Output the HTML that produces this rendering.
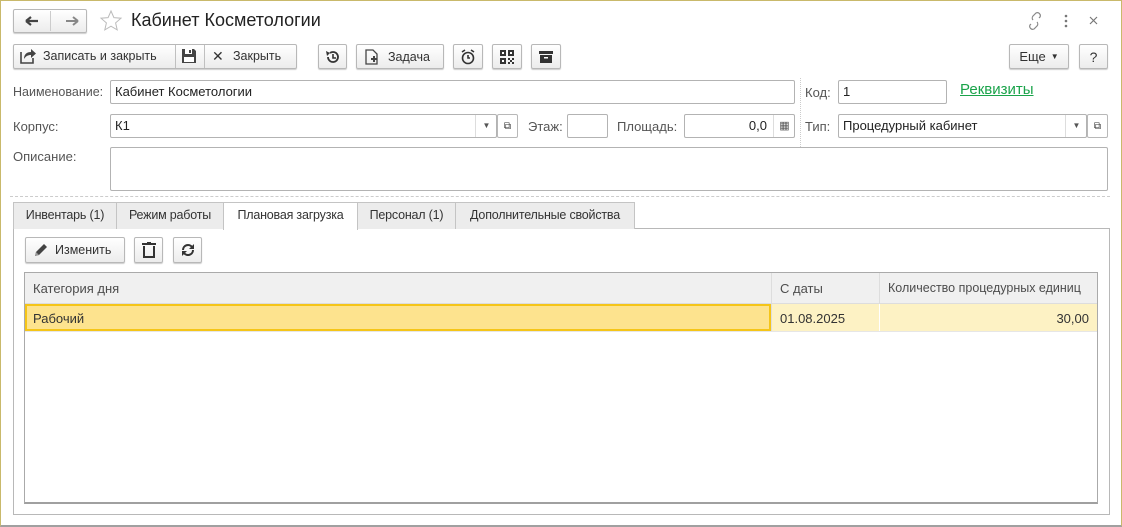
<!DOCTYPE html><html><head><meta charset="utf-8"><style>
*{box-sizing:border-box}
body{margin:0;width:1122px;height:527px;overflow:hidden;background:#fff;font-family:"Liberation Sans",sans-serif;font-size:13px;color:#4d4d4d;position:relative}
.a{position:absolute;white-space:nowrap}
.win{position:absolute;left:0;top:0;width:1122px;height:527px;border:1px solid #c9b96b;border-bottom:2px solid #a0a0a0}
.btn{position:absolute;height:25px;border:1px solid #b8b8b8;border-radius:2px;background:linear-gradient(#fff,#ececec);box-shadow:0 1px 1px rgba(0,0,0,.2);display:flex;align-items:center;justify-content:center;color:#333;font-size:13px;white-space:nowrap}
.inp{position:absolute;height:24px;border:1px solid #b3b3b3;border-radius:2px;background:#fff;color:#222;padding:3px 4px;font-size:13px;line-height:16px;white-space:nowrap}
.lbl{position:absolute;color:#555;font-size:13px;white-space:nowrap}
.tab{position:absolute;top:202px;height:27px;border:1px solid #c4c4c4;background:#ececec;color:#333;padding:5px 0 0 0;text-align:center;font-size:12.5px;border-bottom:none;white-space:nowrap;letter-spacing:-0.2px}
.dd{position:absolute;top:0;height:22px;border-left:1px solid #ddd;width:22px;display:flex;align-items:center;justify-content:center;font-size:8px;color:#555}
</style></head><body>
<div class="win"></div>
<div class="btn" style="left:13px;top:9px;width:74px;height:24px"></div>
<div class="a" style="left:50px;top:11px;width:1px;height:20px;background:#ccc"></div>
<svg class="a" style="left:22px;top:14px" width="60" height="14"><path d="M4 7h12M4 7l5-4M4 7l5 4" stroke="#444" stroke-width="2.2" fill="none"/><path d="M44 7h12M56 7l-5-4M56 7l-5 4" stroke="#888" stroke-width="2" fill="none"/></svg>
<svg class="a" style="left:99px;top:9px" width="24" height="24"><path d="M12 2l2.9 6.6 7.1.6-5.4 4.7 1.6 7-6.2-3.7-6.2 3.7 1.6-7L2 9.2l7.1-.6z" fill="none" stroke="#bbb" stroke-width="1"/></svg>
<div class="a" style="left:131px;top:10px;font-size:18px;color:#222">Кабинет Косметологии</div>
<svg class="a" style="left:1026px;top:12px" width="80" height="18"><path d="M4 12l-1 1a3 3 0 0 0 4 4l3-3a3 3 0 0 0 0-4M12 6l1-1a3 3 0 0 0-4-4l-3 3a3 3 0 0 0 0 4" transform="translate(1,0)" stroke="#888" fill="none" stroke-width="1.2"/><circle cx="40" cy="4" r="1.3" fill="#777"/><circle cx="40" cy="9" r="1.3" fill="#777"/><circle cx="40" cy="14" r="1.3" fill="#777"/><path d="M64 5l7 7M71 5l-7 7" stroke="#777" stroke-width="1.2"/></svg>
<div class="btn" style="left:13px;top:44px;width:284px;justify-content:flex-start"></div>
<div class="a" style="left:175px;top:45px;width:1px;height:23px;background:#c0c0c0"></div>
<div class="a" style="left:204px;top:45px;width:1px;height:23px;background:#c0c0c0"></div>
<svg class="a" style="left:20px;top:48px" width="16" height="16"><path d="M1 4v11h12v-5" fill="none" stroke="#444" stroke-width="1.6"/><path d="M4 11c0-5 3-7 7-7V1l5 4.5L11 10V7c-3 0-5 1-7 4z" fill="#444"/></svg>
<div class="a" style="left:43px;top:49px;color:#333;font-size:12.5px">Записать и закрыть</div>
<svg class="a" style="left:181px;top:48px" width="16" height="16"><path d="M1 1h12l2 2v12H1z" fill="#444"/><rect x="4" y="1" width="7" height="5" fill="#fff"/><rect x="8" y="2" width="2" height="3" fill="#444"/><rect x="3" y="9" width="10" height="5" fill="#fff"/></svg>
<div class="a" style="left:212px;top:48px;color:#333;font-size:14px">✕</div>
<div class="a" style="left:233px;top:49px;color:#333;font-size:12.5px">Закрыть</div>
<div class="btn" style="left:318px;top:44px;width:29px"><svg width="16" height="16"><path d="M3 8a5 5 0 1 0 2-4" fill="none" stroke="#333" stroke-width="1.8"/><path d="M1 2l4 2-3 3z" fill="#333"/><path d="M8 5v4h3" fill="none" stroke="#333" stroke-width="1.6"/></svg></div>
<div class="btn" style="left:356px;top:44px;width:88px;justify-content:flex-start;padding-left:7px"><svg width="16" height="16"><path d="M2 1h7l4 4v10H2z" fill="none" stroke="#444" stroke-width="1.3"/><path d="M7 10h6M10 7v6" stroke="#444" stroke-width="2"/></svg><span style="margin-left:8px;font-size:12.5px">Задача</span></div>
<div class="btn" style="left:453px;top:44px;width:30px"><svg width="16" height="16"><circle cx="8" cy="9" r="5.5" fill="none" stroke="#333" stroke-width="1.6"/><path d="M8 6v3h2M2 3l3-2M14 3l-3-2" stroke="#333" stroke-width="1.6" fill="none"/></svg></div>
<div class="btn" style="left:492px;top:44px;width:30px"><svg width="14" height="14"><path d="M0 0h6v6H0zM8 0h6v6H8zM0 8h6v6H0z" fill="#333"/><path d="M2 2h2v2H2zM10 2h2v2h-2zM2 10h2v2H2z" fill="#fff"/><path d="M8 8h2v2H8zM12 8h2v2h-2zM10 10h2v2h-2zM8 12h2v2H8zM12 12h2v2h-2z" fill="#333"/></svg></div>
<div class="btn" style="left:531px;top:44px;width:30px"><svg width="16" height="14"><rect x="1" y="1" width="14" height="3" fill="#333"/><rect x="2" y="5" width="12" height="8" fill="#333"/><rect x="6" y="7" width="4" height="1.5" fill="#fff"/></svg></div>
<div class="btn" style="left:1009px;top:44px;width:60px">Еще <span style="font-size:8px;margin-left:5px">▼</span></div>
<div class="btn" style="left:1079px;top:44px;width:29px;font-size:14px">?</div>
<div class="lbl" style="left:13px;top:85px;font-size:12.5px">Наименование:</div>
<div class="inp" style="left:110px;top:80px;width:685px">Кабинет Косметологии</div>
<div class="a" style="left:800px;top:78px;height:113px;border-left:1px dotted #ccc"></div>
<div class="lbl" style="left:805px;top:85px">Код:</div>
<div class="inp" style="left:838px;top:80px;width:109px">1</div>
<div class="a" style="left:960px;top:81px;color:#1aa34a;font-size:15px;text-decoration:underline">Реквизиты</div>
<div class="lbl" style="left:13px;top:119px">Корпус:</div>
<div class="inp" style="left:110px;top:114px;width:387px">К1<div class="dd" style="left:364px">▼</div></div>
<div class="btn" style="left:497px;top:114px;width:21px;height:24px;box-shadow:none;background:#fff;font-size:10px">⧉</div>
<div class="lbl" style="left:528px;top:119px">Этаж:</div>
<div class="inp" style="left:567px;top:114px;width:41px"></div>
<div class="lbl" style="left:617px;top:119px">Площадь:</div>
<div class="inp" style="left:684px;top:114px;width:111px;text-align:right;padding-right:27px">0,0<div class="dd" style="left:88px;font-size:11px">▦</div></div>
<div class="lbl" style="left:805px;top:119px">Тип:</div>
<div class="inp" style="left:838px;top:114px;width:249px">Процедурный кабинет<div class="dd" style="left:226px">▼</div></div>
<div class="btn" style="left:1087px;top:114px;width:21px;height:24px;box-shadow:none;background:#fff;font-size:10px">⧉</div>
<div class="lbl" style="left:13px;top:149px">Описание:</div>
<div class="inp" style="left:110px;top:147px;width:998px;height:44px"></div>
<div class="a" style="left:10px;top:196px;width:1100px;border-top:1px dashed #ccc"></div>
<div class="a" style="left:13px;top:228px;width:1097px;height:287px;border:1px solid #b8b8b8"></div>
<div class="tab" style="left:13px;width:104px">Инвентарь (1)</div>
<div class="tab" style="left:116px;width:108px">Режим работы</div>
<div class="tab" style="left:223px;width:135px;background:#fff;height:28px;z-index:2">Плановая загрузка</div>
<div class="tab" style="left:357px;width:99px">Персонал (1)</div>
<div class="tab" style="left:455px;width:180px">Дополнительные свойства</div>
<div class="btn" style="left:25px;top:237px;width:100px;height:26px;justify-content:flex-start;padding-left:7px"><svg width="16" height="16"><path d="M2 14l1-4 8-8 3 3-8 8z" fill="#444"/><path d="M2 14l1-4 3 3z" fill="#999"/></svg><span style="margin-left:6px;font-size:12.5px">Изменить</span></div>
<div class="btn" style="left:134px;top:237px;width:29px;height:26px"><svg width="14" height="16"><path d="M0 2h14" stroke="#333" stroke-width="2"/><path d="M5 1h4" stroke="#333" stroke-width="2"/><path d="M2 4v11h10V4" fill="none" stroke="#333" stroke-width="2"/></svg></div>
<div class="btn" style="left:173px;top:237px;width:29px;height:26px"><svg width="14" height="14"><path d="M2 7a5 5 0 0 1 9-3" fill="none" stroke="#333" stroke-width="2"/><path d="M12 7a5 5 0 0 1-9 3" fill="none" stroke="#333" stroke-width="2"/><path d="M13 1v5H8z" fill="#333"/><path d="M1 13V8h5z" fill="#333"/></svg></div>
<div class="a" style="left:24px;top:272px;width:1074px;height:232px;border:1px solid #aaa;border-bottom:2px solid #a0a0a0"></div>
<div class="a" style="left:25px;top:273px;width:1072px;height:30px;background:#f0f0f0"></div>
<div class="a" style="left:771px;top:273px;width:1px;height:58px;background:#ddd"></div>
<div class="a" style="left:879px;top:273px;width:1px;height:58px;background:#ddd"></div>
<div class="a" style="left:33px;top:281px">Категория дня</div>
<div class="a" style="left:780px;top:281px">С даты</div>
<div class="a" style="left:888px;top:281px;font-size:12.5px">Количество процедурных единиц</div>
<div class="a" style="left:25px;top:303px;width:1072px;height:1px;background:#ddd"></div>
<div class="a" style="left:772px;top:304px;width:325px;height:27px;background:#fdf2c4"></div>
<div class="a" style="left:879px;top:304px;width:1px;height:27px;background:#fff"></div>
<div class="a" style="left:25px;top:304px;width:746px;height:27px;background:#fde38e;border:2px solid #f5c518"></div>
<div class="a" style="left:33px;top:311px;color:#333">Рабочий</div>
<div class="a" style="left:780px;top:311px;color:#333">01.08.2025</div>
<div class="a" style="left:1000px;top:311px;width:89px;text-align:right;color:#333">30,00</div>
<div class="a" style="left:25px;top:331px;width:1072px;height:1px;background:#e6e6e6"></div>
</body></html>
